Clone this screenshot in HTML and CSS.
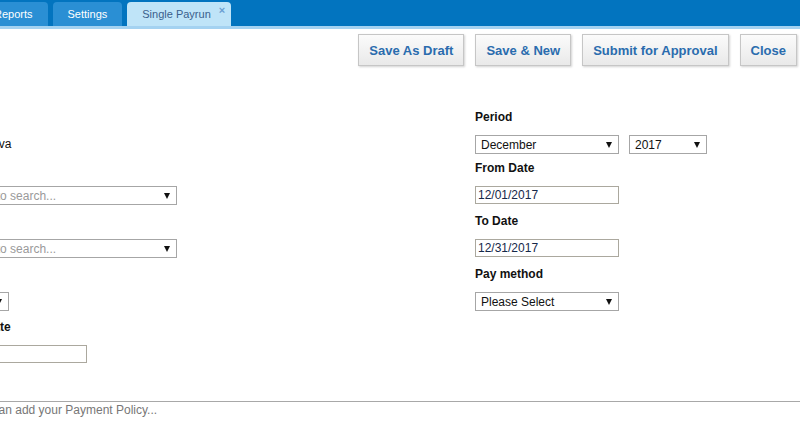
FILE: index.html
```html
<!DOCTYPE html>
<html>
<head>
<meta charset="utf-8">
<link rel="stylesheet" href="styles.css">
</head>
<body>
<div class="topbar">
  <div class="tabs">
    <div class="tab">Reports</div>
    <div class="tab">Settings</div>
    <div class="tab active">Single Payrun<span class="tab-close">×</span></div>
  </div>
</div>
<div class="toolbar">
  <button class="btn">Save As Draft</button>
  <button class="btn">Save &amp; New</button>
  <button class="btn">Submit for Approval</button>
  <button class="btn">Close</button>
</div>
<div class="form">
  <div class="col col-left">
    <div class="field">
      <div class="label">Employee</div>
      <div class="value">Nadia Kuznetsova</div>
    </div>
    <div class="field">
      <div class="label">Department</div>
      <div class="select select-wide placeholder"><span>Select or type to search...</span><i class="arrow"></i></div>
    </div>
    <div class="field">
      <div class="label">Cost Center</div>
      <div class="select select-wide placeholder"><span>Select or type to search...</span><i class="arrow"></i></div>
    </div>
    <div class="field">
      <div class="label">Currency</div>
      <div class="select select-narrow"><span>USD</span><i class="arrow"></i></div>
    </div>
    <div class="field">
      <div class="label">Transaction Date</div>
      <div class="input input-left"></div>
    </div>
  </div>
  <div class="col col-right">
    <div class="field">
      <div class="label">Period</div>
      <div class="row">
        <div class="select select-main"><span>December</span><i class="arrow"></i></div>
        <div class="select select-year"><span>2017</span><i class="arrow"></i></div>
      </div>
    </div>
    <div class="field">
      <div class="label">From Date</div>
      <div class="input input-main">12/01/2017</div>
    </div>
    <div class="field">
      <div class="label">To Date</div>
      <div class="input input-main">12/31/2017</div>
    </div>
    <div class="field">
      <div class="label">Pay method</div>
      <div class="select select-main"><span>Please Select</span><i class="arrow"></i></div>
    </div>
  </div>
</div>
<div class="policy">
  <div class="policy-text">You can add your Payment Policy...</div>
</div>
</body>
</html>
```

FILE: styles.css
```css
html, body {
  margin: 0;
  padding: 0;
}
body {
  width: 800px;
  height: 438px;
  overflow: hidden;
  background: #ffffff;
  font-family: "Liberation Sans", Arial, sans-serif;
  font-size: 12px;
  color: #111111;
}

/* Top bar */
.topbar {
  height: 26px;
  background: #0274bf;
  border-bottom: 3px solid #a4d2f1;
  display: flex;
  align-items: flex-end;
}
.tabs {
  display: flex;
  gap: 5px;
  margin-left: -21px;
}
.tab {
  height: 24px;
  line-height: 24px;
  padding: 0 15px;
  background: #2a8fd4;
  color: #ffffff;
  font-size: 11px;
  border-radius: 4px 4px 0 0;
  white-space: nowrap;
}
.tab.active {
  background: #bfe4f8;
  color: #3a5f8c;
  padding: 0 6px 0 15px;
  display: flex;
  align-items: flex-start;
}
.tab-close {
  margin-left: 8px;
  font-size: 11px;
  font-weight: bold;
  line-height: 16px;
  color: #6a9fd2;
}

/* Toolbar */
.toolbar {
  display: flex;
  justify-content: flex-end;
  gap: 11px;
  padding: 5px 3px 0 0;
}
.btn {
  height: 32px;
  padding: 0 10px;
  font-family: "Liberation Sans", Arial, sans-serif;
  font-size: 13px;
  font-weight: bold;
  color: #2a6cae;
  background: linear-gradient(#fbfbfb, #e9e9e9);
  border: 1px solid #c6c6c6;
  border-radius: 0;
  box-shadow: 1px 1px 2px rgba(0, 0, 0, 0.18);
}

/* Form */
.form {
  display: grid;
  grid-template-columns: 561px 1fr;
  margin: 43px 0 0 -86px;
}
.field {
  display: grid;
  grid-template-rows: 16px 19px;
  row-gap: 10px;
  align-items: start;
  margin-bottom: 8px;
}
.field:first-child {
  margin-bottom: 6px;
}
.label {
  font-weight: bold;
  line-height: 16px;
  white-space: nowrap;
}
.value {
  height: 19px;
  line-height: 19px;
  white-space: nowrap;
}
.row {
  display: flex;
  gap: 10px;
}
.select {
  box-sizing: border-box;
  height: 19px;
  border: 1px solid #a6a6a6;
  padding: 0 6px 0 5px;
  display: flex;
  align-items: center;
  justify-content: space-between;
  white-space: nowrap;
  overflow: hidden;
  background: #ffffff;
}
.select.placeholder span {
  color: #9a9a9a;
}
.arrow {
  flex: none;
  width: 0;
  height: 0;
  border-left: 3.5px solid transparent;
  border-right: 3.5px solid transparent;
  border-top: 6px solid #111111;
  margin-left: 6px;
}
.select-wide { width: 263px; }
.select-narrow { width: 95px; }
.select-main { width: 144px; }
.select-year { width: 78px; }

.input {
  box-sizing: border-box;
  height: 18px;
  line-height: 16px;
  border: 1px solid #aba89e;
  padding: 0 2px;
  color: #15284a;
  white-space: nowrap;
}
.input-left { width: 173px; }
.input-main { width: 144px; }

/* Policy */
.policy {
  margin-top: 29px;
  border-top: 1px solid #a8a8a8;
}
.policy-text {
  margin-left: -31px;
  line-height: 16px;
  color: #777777;
}
```
